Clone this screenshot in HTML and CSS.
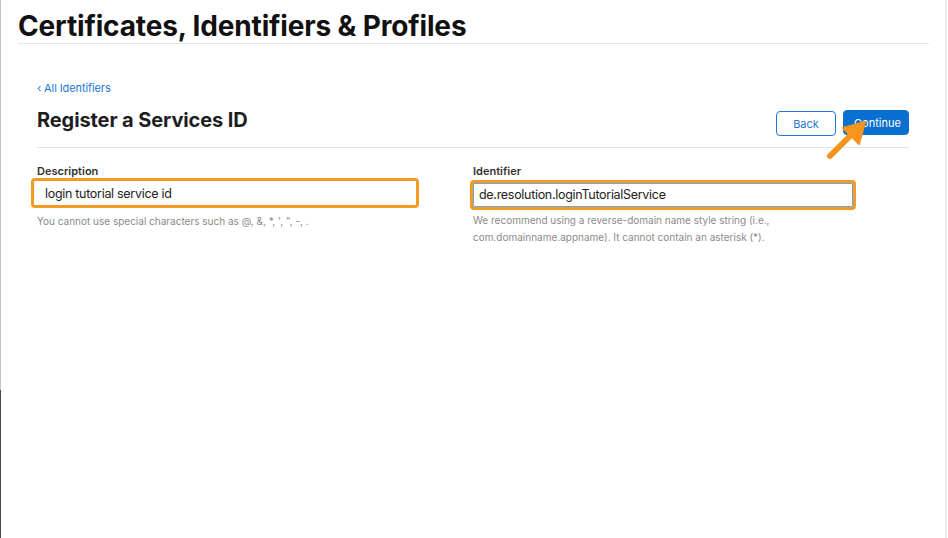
FILE: index.html
```html
<!DOCTYPE html>
<html>
<head>
<meta charset="utf-8">
<link rel="stylesheet" href="styles.css">
</head>
<body>
<div class="frame">
  <div class="edge-left"></div>
  <main class="page">
    <header class="top">
      <h1 class="top-title">Certificates, Identifiers &amp; Profiles</h1>
    </header>
    <section class="content">
      <a class="back-link" href="#">‹ All Identifiers</a>
      <div class="head-row">
        <h2 class="page-title">Register a Services ID</h2>
        <div class="actions">
          <button class="btn btn-outline">Back</button>
          <button class="btn btn-primary">Continue</button>
        </div>
      </div>
      <div class="form-grid">
        <div class="field">
          <label class="field-label">Description</label>
          <div class="input hl">login tutorial service id</div>
          <p class="help">You cannot use special characters such as @, &amp;, *, ', ", -, .</p>
        </div>
        <div class="field">
          <label class="field-label">Identifier</label>
          <div class="input hl focus">de.resolution.loginTutorialService</div>
          <p class="help">We recommend using a reverse-domain name style string (i.e.,<br>com.domainname.appname). It cannot contain an asterisk (*).</p>
        </div>
      </div>
    </section>
    <svg class="arrow" width="48" height="48" viewBox="0 0 48 48">
      <line x1="6" y1="42" x2="30" y2="18" stroke="#f7941d" stroke-width="6" stroke-linecap="round"/>
      <polygon points="41,8 19,14 35,30" fill="#f7941d" stroke="#f7941d" stroke-width="2" stroke-linejoin="round"/>
    </svg>
  </main>
  <div class="edge-right"></div>
</div>
</body>
</html>
```
FILE: styles.css
```css
* { box-sizing: border-box; }
html, body { margin: 0; padding: 0; background: #fff; }
body {
  font-family: Inter, "Liberation Sans", Arial, sans-serif;
  color: #1d1d1f;
  width: 948px;
  height: 538px;
  overflow: hidden;
}
.frame {
  display: flex;
  width: 948px;
  height: 538px;
}
.edge-left {
  width: 1px;
  flex: none;
  background: linear-gradient(#c4c4c4 0, #c4c4c4 390px, #474747 390px);
}
.edge-right {
  width: 2px;
  flex: none;
  margin-right: 1px;
  background: #efefef;
}
.page {
  flex: 1;
  position: relative;
}
.top {
  margin: 0 16px 0 17px;
  padding-top: 10px;
  border-bottom: 1px solid #e6e6e6;
}
.top-title {
  margin: 0;
  font-size: 28px;
  line-height: 32px;
  font-weight: 700;
  letter-spacing: -0.15px;
  color: #111;
  padding-bottom: 1px;
}
.content {
  margin: 0 36px 0 36px;
  padding-top: 37px;
}
.back-link {
  display: block;
  font-size: 11px;
  line-height: 14px;
  letter-spacing: -0.1px;
  color: #2478d4;
  text-decoration: none;
}
.head-row {
  display: flex;
  align-items: flex-start;
  justify-content: space-between;
  margin-top: 10px;
  padding-bottom: 11px;
  border-bottom: 1px solid #e3e3e3;
}
.page-title {
  margin: 3px 0 0;
  font-size: 20px;
  line-height: 24px;
  font-weight: 700;
  color: #1d1d1f;
  letter-spacing: -0.1px;
}
.actions {
  display: flex;
  align-items: flex-start;
  gap: 7px;
  margin-top: 5px;
}
.btn {
  font-family: inherit;
  font-size: 11px;
  height: 25px;
  border-radius: 4px;
  padding: 0 10px;
  cursor: pointer;
}
.btn-outline {
  width: 60px;
  margin-top: 1px;
  background: #fff;
  border: 1px solid #2478d4;
  color: #2478d4;
}
.btn-primary {
  width: 66px;
  background: #0a70cf;
  border: 1px solid #0a70cf;
  color: #fff;
}
.form-grid {
  display: grid;
  grid-template-columns: 436px 436px;
  margin-top: 16px;
}
.field-label {
  display: block;
  font-size: 11px;
  line-height: 14px;
  font-weight: 600;
  color: #333;
}
.input {
  width: 382px;
  height: 26px;
  border: 1px solid #c9c9c9;
  border-radius: 3px;
  font-size: 12.5px;
  letter-spacing: -0.3px;
  line-height: 24px;
  padding-left: 7px;
  color: #222;
}
.input.hl {
  margin-top: 0;
  margin-left: -6px;
  width: 388px;
  padding-left: 11px;
  padding-top: 1px;
  border: 3px solid #f59a23;
  border-radius: 4px;
  line-height: 23px;
  height: 30px;
}
.input.focus {
  margin-top: 2px;
  margin-left: -3px;
  width: 386px;
  padding-left: 6px;
  padding-top: 0;
  box-shadow: inset 0 0 0 1px #6aa6e6;
}
.help {
  margin: 5px 0 0;
  font-size: 10px;
  line-height: 17px;
  color: #8a8a8a;
}
.field:last-child .help { margin-top: 2px; }
.arrow {
  position: absolute;
  left: 823px;
  top: 114px;
}
```
